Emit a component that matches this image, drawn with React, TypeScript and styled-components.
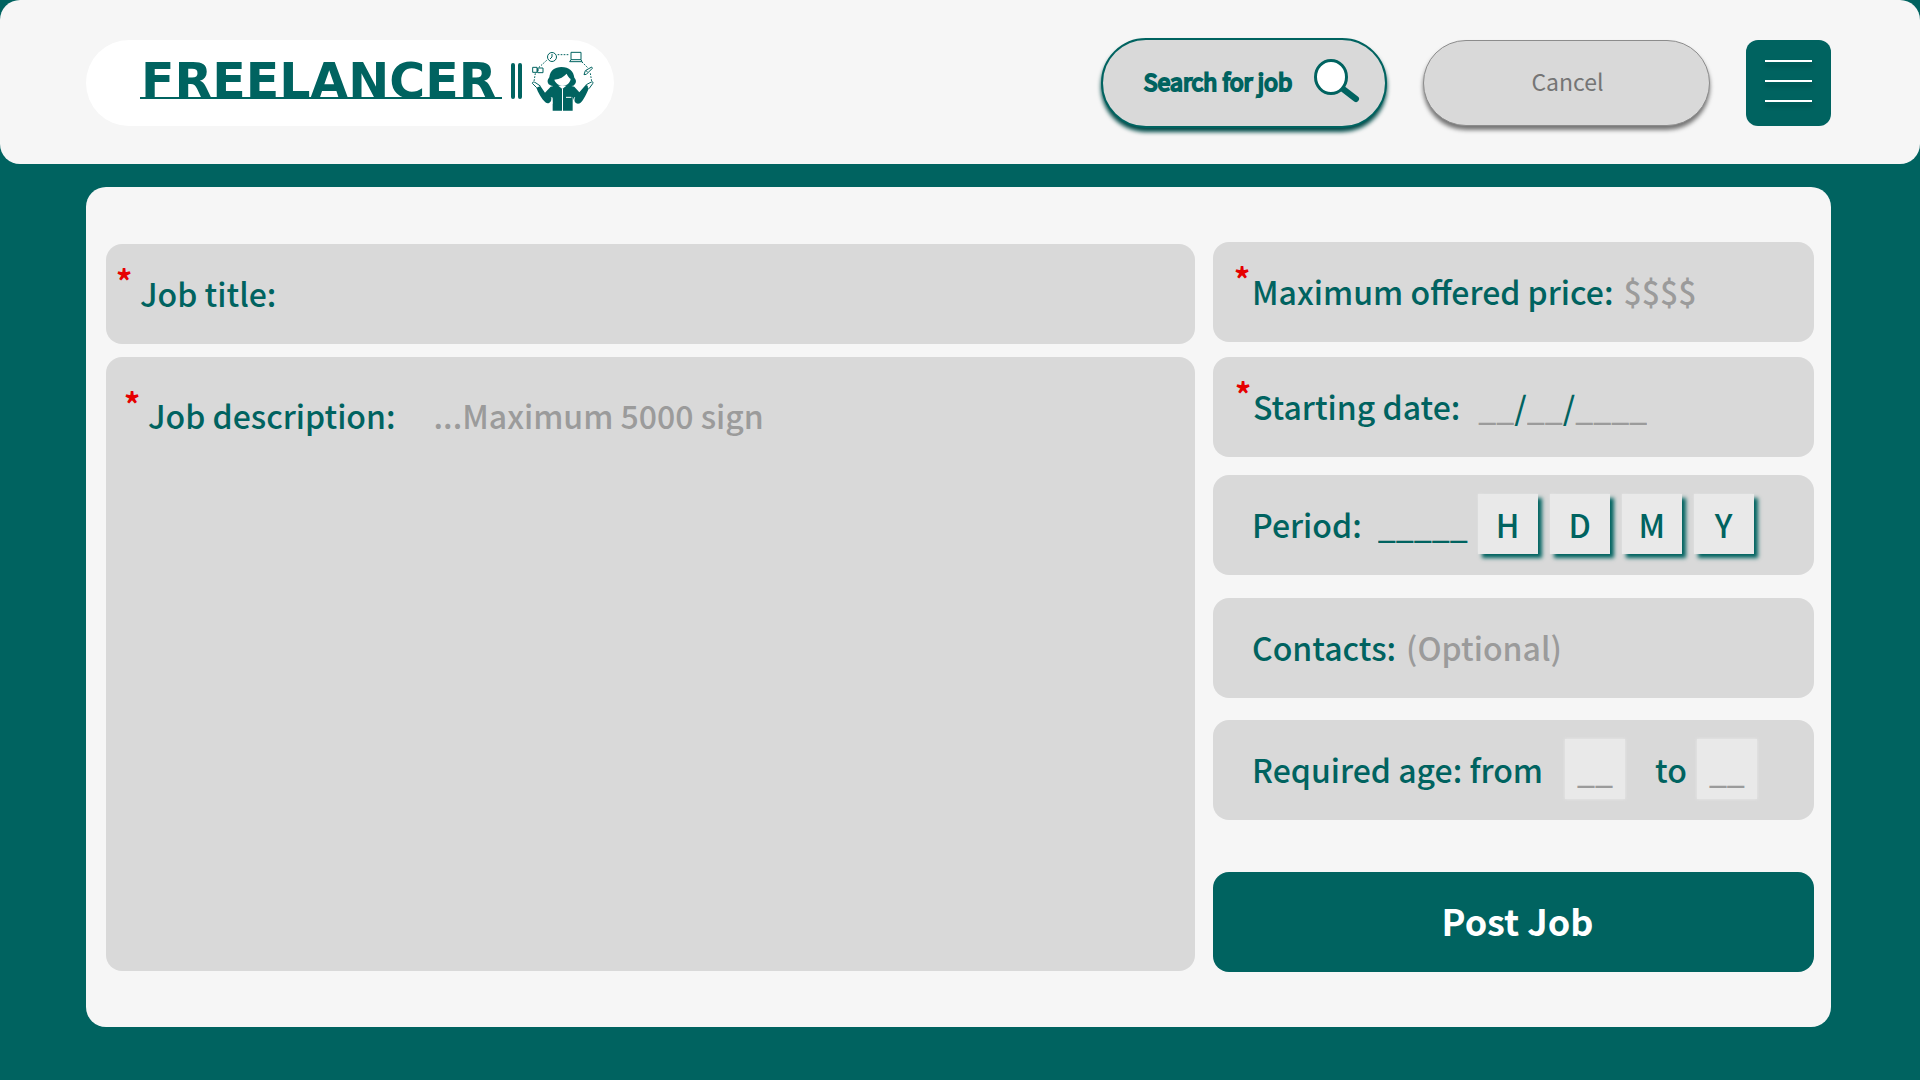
import React, { useState } from "react";
import styled, { createGlobalStyle } from "styled-components";

const teal = "#006360";
const paper = "#f6f6f6";
const grey = "#d9d9d9";
const hint = "#9b9b9b";

const GlobalStyle = createGlobalStyle`
  *, *::before, *::after { box-sizing: border-box; }
  body {
    margin: 0;
    background: ${teal};
    font-family: "Noto Sans CJK SC", "Noto Sans", sans-serif;
  }
  button, input, textarea { font: inherit; color: inherit; }
  button { cursor: pointer; }
`;

const Page = styled.div`
  min-height: 100vh;
  background: ${teal};
  color: ${teal};
`;

const Header = styled.header`
  display: flex;
  align-items: center;
  gap: 36px;
  height: 164px;
  padding: 2px 89px 0 86px;
  border-radius: 20px;
  background: ${paper};
`;

const Logo = styled.a`
  display: flex;
  align-items: center;
  gap: 9px;
  width: 528px;
  height: 86px;
  margin-right: auto;
  padding: 0 0 4px 54px;
  border-radius: 43px;
  background: #fff;
  color: ${teal};
  text-decoration: none;
`;

const Wordmark = styled.span`
  width: 362px;
  height: 36px;
  padding-left: 1px;
  border-bottom: 2px solid ${teal};
  font: 700 49px/38px "DejaVu Sans", sans-serif;
  white-space: nowrap;
`;

const Bars = styled.span`
  display: flex;
  justify-content: space-between;
  width: 11px;
  height: 36px;

  &::before, &::after {
    content: "";
    width: 4px;
    border-radius: 2px;
    background: ${teal};
  }
`;

const Pill = styled.button<{ $primary?: boolean }>`
  display: flex;
  align-items: center;
  justify-content: center;
  gap: 22px;
  width: ${(p) => (p.$primary ? 286 : 287)}px;
  height: ${(p) => (p.$primary ? 90 : 86)}px;
  padding: 0 0 4px ${(p) => (p.$primary ? 16 : 2)}px;
  border: ${(p) => (p.$primary ? `2px solid ${teal}` : "1px solid #8c8c8c")};
  border-radius: 45px;
  background: ${grey};
  color: ${(p) => (p.$primary ? teal : "#757575")};
  box-shadow: 0 4px 4px ${(p) => (p.$primary ? "#004b49" : "#757575")};
  font-size: 23px;
  -webkit-text-stroke: ${(p) => (p.$primary ? "2px" : "0")};
`;

const MenuButton = styled.button`
  display: flex;
  flex-direction: column;
  align-items: center;
  justify-content: center;
  gap: 18px;
  width: 85px;
  height: 86px;
  padding: 0 0 4px;
  border: 0;
  border-radius: 12px;
  background: ${teal};
`;

const MenuLine = styled.span`
  width: 47px;
  height: 2px;
  background: #fff;
  box-shadow: 0 4px 4px rgba(0, 0, 0, 0.25);
`;

const Form = styled.form`
  display: grid;
  grid-template-columns: minmax(0, 1089fr) minmax(0, 601fr);
  gap: 18px;
  margin: 23px 89px 53px 86px;
  padding: 55px 17px 55px 20px;
  border-radius: 20px;
  background: ${paper};
  font-size: 32px;
  font-weight: 500;
  line-height: 46px;
`;

const MainColumn = styled.div`
  display: flex;
  flex-direction: column;
  gap: 13px;
  padding: 2px 0 1px;
`;

const SideColumn = styled.div`
  display: grid;
  grid-template-rows: 115px 118px 123px 122px 152px 100px;
  align-items: start;
`;

const Field = styled.div<{ $inset: number }>`
  display: flex;
  align-items: center;
  height: 100px;
  padding: 0 16px 2px ${(p) => p.$inset}px;
  border-radius: 16px;
  background: ${grey};
`;

const DescriptionField = styled(Field)`
  flex: 1;
  align-items: flex-start;
  height: auto;
  padding-top: 35px;
`;

const Label = styled.label<{ $before?: number; $after?: number }>`
  flex: none;
  margin: 0 ${(p) => p.$after ?? 10}px 0 ${(p) => p.$before ?? 0}px;
`;

const Star = styled.span<{ $width: number }>`
  flex: none;
  align-self: flex-start;
  width: ${(p) => p.$width}px;
  padding-top: 14px;
  color: #e60000;
  font-weight: 700;
  line-height: 44px;
`;

const DescriptionStar = styled(Star)`
  padding-top: 0;
  line-height: 22px;
`;

const TextInput = styled.input<{ $tone?: string; $width?: number }>`
  flex: ${(p) => (p.$width ? "none" : "1")};
  width: ${(p) => (p.$width ? `${p.$width}px` : "auto")};
  min-width: 0;
  height: 60px;
  padding: 0;
  border: 0;
  outline: 0;
  background: transparent;
  &::placeholder { color: ${(p) => p.$tone ?? hint}; opacity: 1; }
`;

const TextArea = styled.textarea`
  flex: 1;
  align-self: stretch;
  min-width: 0;
  padding: 0;
  border: 0;
  outline: 0;
  resize: none;
  background: transparent;
  &::placeholder { color: ${hint}; opacity: 1; }
`;

const Units = styled.div`
  display: flex;
  gap: 12px;
`;

const UnitButton = styled.button`
  width: 60px;
  height: 60px;
  padding: 0;
  border: 0;
  background: #e9e9e9;
  box-shadow: 4px 4px 4px ${teal}, 0 0 2px #e9e9e9;
`;

const AgeInput = styled(TextInput)`
  flex: none;
  width: 60px;
  background: #e9e9e9;
  box-shadow: 0 0 3px #e9e9e9;
  text-align: center;
`;

const Submit = styled.button`
  height: 100px;
  padding: 0 0 4px 8px;
  border: 0;
  border-radius: 16px;
  background: ${teal};
  color: #fff;
  font-size: 36px;
  font-weight: 700;
`;

function Freelancer() {
  return (
    <svg width="64" height="62" viewBox="60 30 192 186" fill="none" stroke={teal} strokeWidth="3" aria-hidden="true">
      <circle cx="123" cy="51" r="13.500" />
      <path d="M123 42v9l-6 6" />
      <path d="M140 44h34" strokeDasharray="5 4" />
      <path d="M180 37h30v22h-30zM176 65h37M180 59l-4 6M210 59l3 6" />
      <path d="M107 61 84 82M73 100l-4 24M213 66l18 18M238 100l4 24" strokeDasharray="5 4" />
      <path d="M65 82h13v15H65zM80 84h16v14H80zM78 90h6" />
      <path d="m219 104 4-12 19-11 2 4-18 18zM225 92l5 4" />
      <path
        fill={teal}
        stroke="none"
        d="M113 133c-6-10-2-15 2-21 2-21 17-31 36-31 24 0 37 13 39 32 7 7 7 17-3 24l-12 2-20-3-23 3c-8 0-14-2-19-6z"
      />
      <path fill="#fff" stroke="none" d="M130 119c17-2 29-9 37-18 3 8 8 13 12 16-2 13-12 20-24 20s-22-8-25-18z" />
      <path
        fill={teal}
        stroke="none"
        d="m75 141 11-6 16 23 17-18 20-5 15 12 15-12 21 5 15 17 19-22 11 5c-8 22-17 40-28 50-7 3-13 1-17-7l-5-13v42h-60v-42l-5 13c-5 8-11 9-17 4-12-11-21-28-28-46z"
      />
      <path stroke="#fff" d="M154.500 146v68M165 172h16" />
      <path stroke="#fff" d="M121 171l3 20M191 171l-3 20" strokeWidth="2" />
      <path
        fill="#fff"
        d="M77 143 64 130c0-5 5-5 11-1l13 9M230 142l-4-8 15-8c5-2 6 1 4 5l-11 15"
        strokeLinejoin="round"
      />
    </svg>
  );
}

function SearchIcon() {
  return (
    <svg width="46" height="44" viewBox="0 0 46 44" fill="none" stroke={teal} aria-hidden="true">
      <path d="M29 30 42 40" strokeWidth="6" strokeLinecap="round" />
      <ellipse cx="17" cy="18" rx="15.500" ry="16.500" fill="#fff" strokeWidth="3" />
    </svg>
  );
}

export default function App() {
  const [unit, setUnit] = useState("");

  return (
    <Page>
      <GlobalStyle />
      <Header>
        <Logo href="#" aria-label="Freelancer">
          <Wordmark>FREELANCER</Wordmark>
          <Bars />
          <Freelancer />
        </Logo>
        <Pill type="button" $primary>
          Search for job
          <SearchIcon />
        </Pill>
        <Pill type="button">Cancel</Pill>
        <MenuButton type="button" aria-label="Menu">
          <MenuLine />
          <MenuLine />
          <MenuLine />
        </MenuButton>
      </Header>

      <Form onSubmit={(e) => e.preventDefault()}>
        <MainColumn>
          <Field $inset={10}>
            <Star $width={24}>*</Star>
            <Label htmlFor="title">Job title:</Label>
            <TextInput id="title" />
          </Field>
          <DescriptionField $inset={18}>
            <DescriptionStar $width={24}>*</DescriptionStar>
            <Label htmlFor="description" $after={38}>Job description:</Label>
            <TextArea id="description" maxLength={5000} placeholder="...Maximum 5000 sign" />
          </DescriptionField>
        </MainColumn>

        <SideColumn>
          <Field $inset={21}>
            <Star $width={18}>*</Star>
            <Label htmlFor="price">Maximum offered price:</Label>
            <TextInput id="price" placeholder="$$$$" />
          </Field>
          <Field $inset={22}>
            <Star $width={18}>*</Star>
            <Label htmlFor="day" $after={18}>Starting date:</Label>
            <TextInput id="day" $width={36} placeholder="__" />
            /
            <TextInput aria-label="Month" $width={36} placeholder="__" />
            /
            <TextInput aria-label="Year" $width={72} placeholder="____" />
          </Field>
          <Field $inset={39}>
            <Label htmlFor="period" $after={16}>Period:</Label>
            <TextInput id="period" $width={100} $tone={teal} placeholder="_____" />
            <Units>
              {["H", "D", "M", "Y"].map((u) => (
                <UnitButton key={u} type="button" aria-pressed={unit === u} onClick={() => setUnit(u)}>
                  {u}
                </UnitButton>
              ))}
            </Units>
          </Field>
          <Field $inset={39}>
            <Label htmlFor="contacts">Contacts:</Label>
            <TextInput id="contacts" placeholder="(Optional)" />
          </Field>
          <Field $inset={39}>
            <Label htmlFor="from" $after={22}>Required age: from</Label>
            <AgeInput id="from" placeholder="__" />
            <Label htmlFor="to" $before={30}>to</Label>
            <AgeInput id="to" placeholder="__" />
          </Field>
          <Submit type="submit">Post Job</Submit>
        </SideColumn>
      </Form>
    </Page>
  );
}
